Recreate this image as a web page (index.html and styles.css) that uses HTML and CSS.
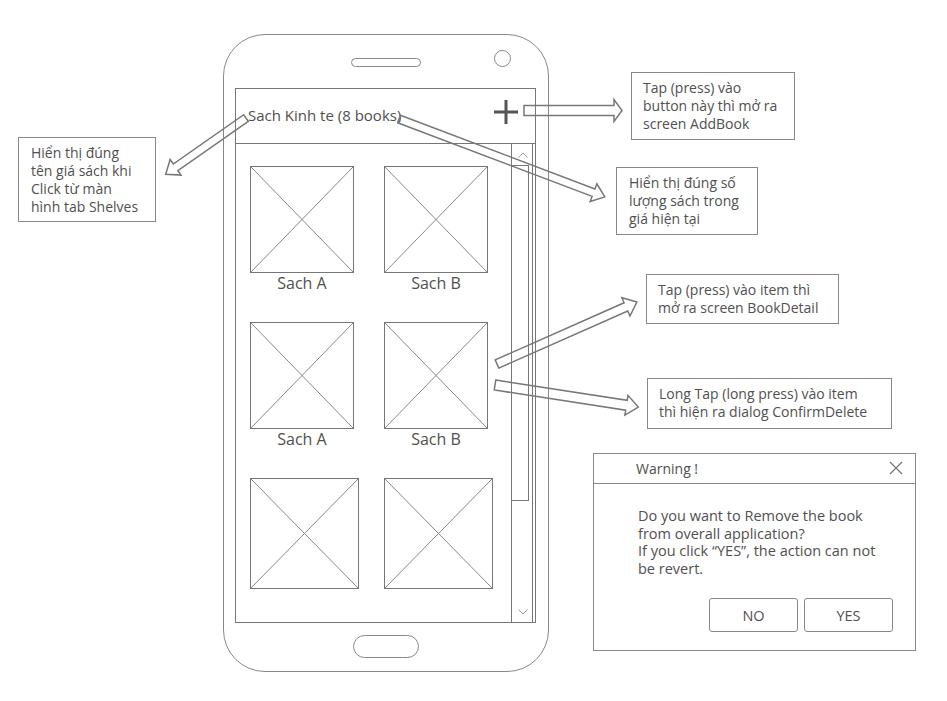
FILE: index.html
```html
<!DOCTYPE html>
<html lang="vi">
<head>
    <meta charset="UTF-8">
    <title>Shelf detail - wireframe</title>
    <link rel="stylesheet" href="styles.css">
</head>
<body>
    <div class="board">
        <!-- phone mockup -->
        <div class="phone">
            <div class="phone-top">
                <span class="speaker"></span>
                <span class="camera"></span>
            </div>
            <div class="screen">
                <div class="screen-header">
                    <span class="shelf-title">Sach Kinh te (8 books)</span>
                    <svg class="add-btn" width="24" height="24" viewBox="0 0 24 24">
                        <path d="M12 0V24M0 12H24" stroke="#555" stroke-width="3" fill="none"/>
                    </svg>
                </div>
                <div class="screen-body">
                    <div class="book-grid">
                        <div class="book">
                            <div class="cover"><svg viewBox="0 0 100 100" preserveAspectRatio="none"><path d="M0 0L100 100M100 0L0 100"/></svg></div>
                            <span class="book-name">Sach A</span>
                        </div>
                        <div class="book">
                            <div class="cover"><svg viewBox="0 0 100 100" preserveAspectRatio="none"><path d="M0 0L100 100M100 0L0 100"/></svg></div>
                            <span class="book-name">Sach B</span>
                        </div>
                        <div class="book">
                            <div class="cover"><svg viewBox="0 0 100 100" preserveAspectRatio="none"><path d="M0 0L100 100M100 0L0 100"/></svg></div>
                            <span class="book-name">Sach A</span>
                        </div>
                        <div class="book">
                            <div class="cover"><svg viewBox="0 0 100 100" preserveAspectRatio="none"><path d="M0 0L100 100M100 0L0 100"/></svg></div>
                            <span class="book-name">Sach B</span>
                        </div>
                        <div class="book">
                            <div class="cover cover-lg"><svg viewBox="0 0 100 100" preserveAspectRatio="none"><path d="M0 0L100 100M100 0L0 100"/></svg></div>
                        </div>
                        <div class="book">
                            <div class="cover cover-lg"><svg viewBox="0 0 100 100" preserveAspectRatio="none"><path d="M0 0L100 100M100 0L0 100"/></svg></div>
                        </div>
                    </div>
                    <div class="scrollbar">
                        <div class="scroll-btn">
                            <svg width="10" height="6" viewBox="0 0 10 6"><path d="M0.5 5.5L5 1L9.5 5.5"/></svg>
                        </div>
                        <div class="scroll-thumb"></div>
                        <div class="scroll-space"></div>
                        <div class="scroll-btn scroll-btn-down">
                            <svg width="10" height="6" viewBox="0 0 10 6"><path d="M0.5 0.5L5 5L9.5 0.5"/></svg>
                        </div>
                    </div>
                </div>
            </div>
            <div class="phone-bottom">
                <span class="home-btn"></span>
            </div>
        </div>

        <!-- notes -->
        <div class="note note-title">Hiển thị đúng<br>tên giá sách khi<br>Click từ màn<br>hình tab Shelves</div>
        <div class="note note-add">Tap (press) vào<br>button này thì mở ra<br>screen AddBook</div>
        <div class="note note-count">Hiển thị đúng số<br>lượng sách trong<br>giá hiện tại</div>
        <div class="note note-tap">Tap (press) vào item thì<br>mở ra screen BookDetail</div>
        <div class="note note-long">Long Tap (long press) vào item<br>thì hiện ra dialog ConfirmDelete</div>

        <!-- confirm dialog -->
        <div class="dialog">
            <div class="dialog-head">
                <span class="dialog-title">Warning !</span>
                <svg class="dialog-close" width="14" height="14" viewBox="0 0 14 14">
                    <path d="M1 1L13 13M13 1L1 13"/>
                </svg>
            </div>
            <div class="dialog-body">
                Do you want to Remove the book<br>
                from overall application?<br>
                If you click “YES”, the action can not<br>
                be revert.
            </div>
            <div class="dialog-actions">
                <button class="dialog-btn">NO</button>
                <button class="dialog-btn">YES</button>
            </div>
        </div>

        <!-- block arrows -->
        <svg class="arrows" width="947" height="701" viewBox="0 0 947 701">
            <path transform="translate(246 118) rotate(145)" d="M0 -4H86V-9.5L98 0L86 9.5V4H0Z"/>
            <path transform="translate(399 119) rotate(20.74)" d="M0 -4H208V-9.5L220 0L208 9.5V4H0Z"/>
            <path transform="translate(524 110.5)" d="M0 -5H90V-11L98 0L90 11V5H0Z"/>
            <path transform="translate(497 364) rotate(-23.89)" d="M0 -4.5H141V-10L153 0L141 10V4.5H0Z"/>
            <path transform="translate(495 385) rotate(8.75)" d="M0 -5H133V-10L145 0L133 10V5H0Z"/>
        </svg>
    </div>
</body>
</html>
```

FILE: styles.css
```css
* {
    box-sizing: border-box;
}
body {
    margin: 0;
    padding: 0;
    background: #fff;
    font-family: "Open Sans", "Liberation Sans", sans-serif;
    color: #505050;
}
.board {
    position: relative;
    width: 947px;
    height: 701px;
    overflow: hidden;
}

/* phone */
.phone {
    position: absolute;
    left: 223px;
    top: 34px;
    width: 326px;
    height: 638px;
    border: 1px solid #888;
    border-radius: 42px;
    display: flex;
    flex-direction: column;
}
.phone-top {
    height: 53px;
    display: grid;
    grid-template-columns: 1fr auto 1fr;
}
.speaker {
    grid-column: 2;
    width: 70px;
    height: 9px;
    margin-top: 23px;
    border: 1px solid #888;
    border-radius: 5px;
}
.camera {
    grid-column: 3;
    justify-self: end;
    width: 17px;
    height: 17px;
    margin: 15px 37px 0 0;
    border: 1px solid #888;
    border-radius: 50%;
}
.screen {
    height: 535px;
    margin: 0 12px 0 11px;
    border: 1px solid #777;
    display: flex;
    flex-direction: column;
}
.screen-header {
    height: 55px;
    border-bottom: 1px solid #777;
    display: flex;
    align-items: center;
    justify-content: space-between;
    padding: 0 17px 3px 12px;
}
.shelf-title {
    font-size: 15px;
}
.add-btn {
    margin-top: -5px;
}
.screen-body {
    flex: 1;
    display: flex;
}
.book-grid {
    flex: 1;
    min-width: 0;
    display: grid;
    grid-template-columns: 134px auto;
    align-content: start;
    row-gap: 29px;
    padding: 22px 0 0 14px;
}
.book {
    display: flex;
    flex-direction: column;
    align-items: center;
    justify-self: start;
}
.cover {
    width: 104px;
    height: 107px;
    border: 1px solid #777;
}
.cover svg {
    display: block;
    width: 100%;
    height: 100%;
}
.cover path {
    stroke: #888;
    stroke-width: 1;
    vector-effect: non-scaling-stroke;
}
.cover-lg {
    width: 109px;
    height: 111px;
}
.book-name {
    font-size: 16px;
    line-height: 20px;
}

/* scrollbar */
.scrollbar {
    flex: none;
    width: 22px;
    margin-right: 2px;
    border-left: 1px solid #777;
    border-right: 1px solid #777;
    display: flex;
    flex-direction: column;
}
.scroll-btn {
    height: 21px;
    display: flex;
    align-items: center;
    justify-content: center;
    padding-left: 1px;
}
.scroll-btn-down {
    height: 20px;
}
.scroll-btn path {
    fill: none;
    stroke: #999;
    stroke-width: 1;
}
.scroll-thumb {
    height: 336px;
    margin-right: 3px;
    border: 1px solid #777;
    border-left: 0;
}
.scroll-space {
    flex: 1;
}

.phone-bottom {
    flex: 1;
    display: flex;
    justify-content: center;
    padding-top: 12px;
}
.home-btn {
    width: 66px;
    height: 23px;
    border: 1px solid #888;
    border-radius: 12px;
}

/* notes */
.note {
    position: absolute;
    border: 1px solid #888;
    font-size: 14px;
    line-height: 18px;
    padding: 6px 0 0 11px;
    white-space: nowrap;
}
.note-title {
    left: 18px;
    top: 137px;
    width: 138px;
    height: 85px;
    padding-left: 12px;
}
.note-add {
    left: 631px;
    top: 72px;
    width: 164px;
    height: 68px;
}
.note-count {
    left: 616px;
    top: 167px;
    width: 142px;
    height: 68px;
    padding-left: 12px;
}
.note-tap {
    left: 646px;
    top: 274px;
    width: 193px;
    height: 50px;
}
.note-long {
    left: 647px;
    top: 378px;
    width: 245px;
    height: 51px;
}

/* dialog */
.dialog {
    position: absolute;
    left: 593px;
    top: 453px;
    width: 323px;
    height: 198px;
    border: 1px solid #888;
    background: #fff;
}
.dialog-head {
    height: 30px;
    border-bottom: 1px solid #888;
    display: flex;
    align-items: center;
    justify-content: space-between;
    padding: 0 12px 1px 42px;
}
.dialog-title {
    font-size: 14px;
}
.dialog-close path {
    stroke: #777;
    stroke-width: 1.2;
}
.dialog-body {
    padding: 23px 0 0 44px;
    font-size: 14.5px;
    line-height: 17.5px;
}
.dialog-actions {
    display: flex;
    justify-content: flex-end;
    gap: 6px;
    padding: 21px 22px 0 0;
}
.dialog-btn {
    width: 89px;
    height: 34px;
    border: 1px solid #888;
    border-radius: 3px;
    background: #fff;
    font-family: inherit;
    font-size: 14.5px;
    color: #505050;
    padding: 0;
}

.arrows {
    position: absolute;
    left: 0;
    top: 0;
    pointer-events: none;
}
.arrows path {
    fill: none;
    stroke: #777;
    stroke-width: 1.5;
    stroke-linejoin: miter;
}
```
